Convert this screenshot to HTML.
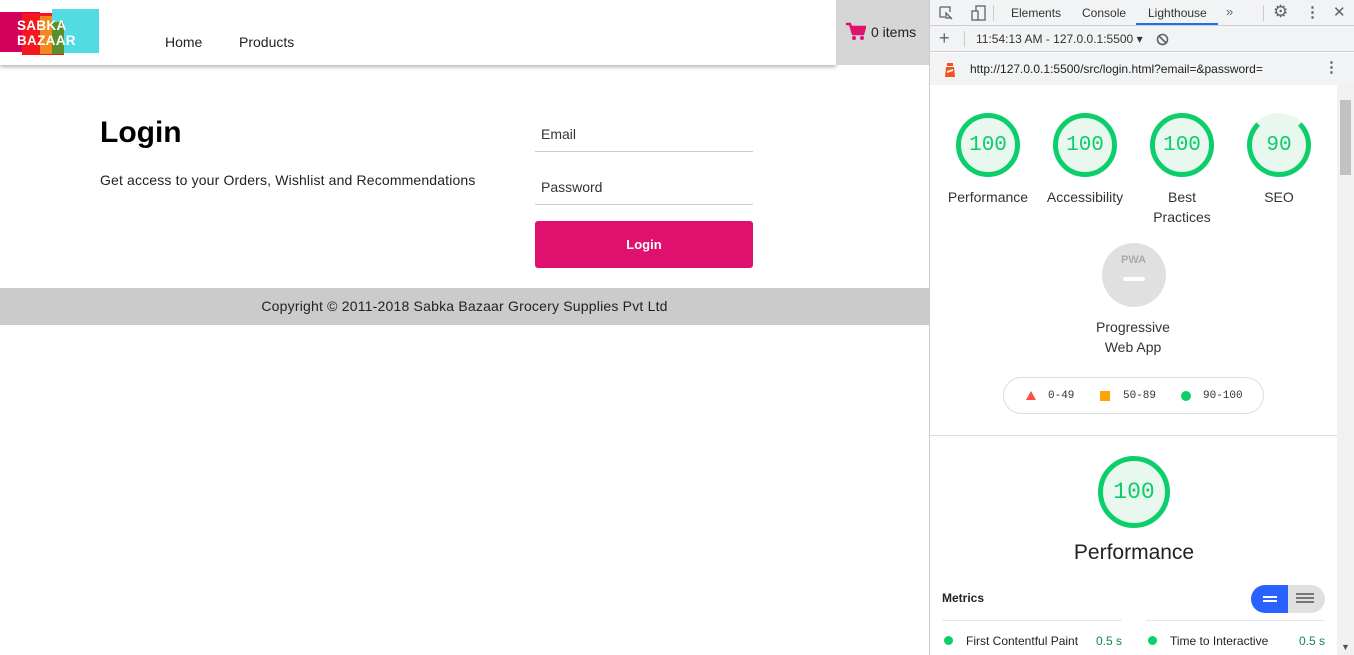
<!DOCTYPE html>
<html><head><style>
*{margin:0;padding:0;box-sizing:border-box}
body{width:1354px;height:655px;overflow:hidden;font-family:"Liberation Sans",sans-serif;background:#fff;position:relative}
.a{position:absolute}
.g{position:absolute;border-radius:50%;border:5px solid #0cce6b;background:#e8f8ef;color:#0cce6b;font-family:"Liberation Mono",monospace;display:flex;align-items:center;justify-content:center}
.lbl{position:absolute;font-size:14px;color:#333;text-align:center;width:100px;line-height:20px}
</style></head><body>
<div class="a" style="left:0;top:0;width:836px;height:65px;background:#fff;box-shadow:0 2px 4px rgba(0,0,0,.3);z-index:2"></div>
<div class="a" style="left:836px;top:0;width:93px;height:65px;background:#d6d6d6;z-index:2"></div>
<div class="a" style="left:0;top:12px;width:40px;height:40px;background:#d1005a;z-index:3"></div>
<div class="a" style="left:22px;top:13px;width:42px;height:42px;background:#f5161e;z-index:3"></div>
<div class="a" style="left:40px;top:16px;width:24px;height:38px;background:#f0891e;z-index:3"></div>
<div class="a" style="left:52px;top:9px;width:47px;height:44px;background:#53dbe4;z-index:3"></div>
<div class="a" style="left:52px;top:22px;width:12px;height:32px;background:#5d8e2c;z-index:3"></div>
<div class="a" style="left:17px;top:18px;color:#fff;font-weight:bold;font-size:13.5px;line-height:15px;z-index:4;letter-spacing:.3px">SABKA<br>BAZAAR</div>
<div class="a" style="left:165px;top:34px;font-size:14px;color:#222;z-index:3">Home</div>
<div class="a" style="left:239px;top:34px;font-size:14px;color:#222;z-index:3">Products</div>
<svg class="a" style="left:846px;top:22px;z-index:3" width="20" height="20" viewBox="0 0 20 20"><path d="M0 2h4l3 10h10l2-7H6" fill="none" stroke="#e0116f" stroke-width="2.5"/><rect x="6" y="5" width="12" height="6" fill="#e0116f"/><circle cx="8" cy="16" r="2" fill="#e0116f"/><circle cx="16" cy="16" r="2" fill="#e0116f"/></svg>
<div class="a" style="left:871px;top:24px;font-size:14px;color:#222;z-index:3">0 items</div>
<div class="a" style="left:100px;top:116px;font-size:30px;font-weight:bold;color:#000">Login</div>
<div class="a" style="left:100px;top:172px;font-size:14px;color:#222;letter-spacing:.15px">Get access to your Orders, Wishlist and Recommendations</div>
<div class="a" style="left:541px;top:126px;font-size:14px;color:#333">Email</div>
<div class="a" style="left:535px;top:151px;width:218px;height:1px;background:#ccc"></div>
<div class="a" style="left:541px;top:179px;font-size:14px;color:#333">Password</div>
<div class="a" style="left:535px;top:204px;width:218px;height:1px;background:#ccc"></div>
<div class="a" style="left:535px;top:221px;width:218px;height:47px;background:#e0106f;border-radius:3px;color:#fff;font-size:13px;font-weight:bold;display:flex;align-items:center;justify-content:center">Login</div>
<div class="a" style="left:0;top:288px;width:929px;height:37px;background:#cbcbcb;font-size:14px;color:#222;text-align:center;line-height:37px;letter-spacing:.2px">Copyright © 2011-2018 Sabka Bazaar Grocery Supplies Pvt Ltd</div>
<div class="a" style="left:929px;top:0;width:425px;height:655px;background:#fff;border-left:1px solid #ccc"></div>
<div class="a" style="left:930px;top:0;width:424px;height:26px;background:#f1f3f4;border-bottom:1px solid #cbcdd1"></div>
<svg class="a" style="left:938px;top:5px" width="50" height="16"><path d="M2 2h10v5M2 2v10h5M8 8l6 6M8 8v5h5z" fill="none" stroke="#5f6368" stroke-width="1.3"/><rect x="38" y="1" width="9" height="14" fill="none" stroke="#5f6368" stroke-width="1.3"/><rect x="34" y="6" width="6" height="9" fill="#f1f3f4" stroke="#5f6368" stroke-width="1.3"/></svg>
<div class="a" style="left:993px;top:5px;width:1px;height:16px;background:#ccc"></div>
<div class="a" style="left:1011px;top:6px;font-size:12px;color:#333">Elements</div>
<div class="a" style="left:1082px;top:6px;font-size:12px;color:#333">Console</div>
<div class="a" style="left:1148px;top:6px;font-size:12px;color:#333">Lighthouse</div>
<div class="a" style="left:1136px;top:23px;width:82px;height:2px;background:#1a73e8"></div>
<div class="a" style="left:1226px;top:4px;font-size:13px;color:#666">»</div>
<div class="a" style="left:1263px;top:5px;width:1px;height:16px;background:#ccc"></div>
<div class="a" style="left:1273px;top:2px;font-size:17px;color:#5f6368">⚙</div>
<div class="a" style="left:1305px;top:3px;font-size:15px;color:#5f6368;font-weight:bold">⋮</div>
<div class="a" style="left:1333px;top:3px;font-size:15px;color:#5f6368">✕</div>
<div class="a" style="left:930px;top:26px;width:424px;height:26px;background:#f1f3f4;border-bottom:1px solid #cbcdd1"></div>
<div class="a" style="left:939px;top:28px;font-size:18px;color:#5f6368">+</div>
<div class="a" style="left:964px;top:31px;width:1px;height:16px;background:#ccc"></div>
<div class="a" style="left:976px;top:32px;font-size:12px;color:#333">11:54:13 AM - 127.0.0.1:5500 ▾</div>
<svg class="a" style="left:1156px;top:33px" width="13" height="13"><circle cx="6.5" cy="6.5" r="5" fill="none" stroke="#5f6368" stroke-width="1.6"/><path d="M3 3l7 7" stroke="#5f6368" stroke-width="1.6"/></svg>
<div class="a" style="left:930px;top:53px;width:424px;height:32px;background:#f1f3f4"></div>
<svg class="a" style="left:943px;top:60px" width="14" height="18"><path d="M4 3h6v3H4z" fill="#f4511e"/><path d="M3 7h8l1 10H2z" fill="#f4511e"/><path d="M4 11l6-2v2l-6 2z" fill="#fff"/></svg>
<div class="a" style="left:970px;top:62px;font-size:12px;color:#222">http://127.0.0.1:5500/src/login.html?email=&amp;password=</div>
<div class="a" style="left:1324px;top:58px;font-size:15px;color:#5f6368;font-weight:bold">⋮</div>
<div class="a" style="left:1337px;top:85px;width:17px;height:570px;background:#f1f1f1"></div>
<div class="a" style="left:1340px;top:100px;width:11px;height:75px;background:#c1c1c1"></div>
<div class="a" style="left:1341px;top:642px;font-size:9px;color:#555">▼</div>
<div class="g" style="left:956px;top:113px;width:64px;height:64px;font-size:21px">100</div>
<div class="g" style="left:1053px;top:113px;width:64px;height:64px;font-size:21px">100</div>
<div class="g" style="left:1150px;top:113px;width:64px;height:64px;font-size:21px">100</div>
<div class="g" style="left:1247px;top:113px;width:64px;height:64px;font-size:21px;border-top-color:#e8f8ef">90</div>
<div class="lbl" style="left:938px;top:187px">Performance</div>
<div class="lbl" style="left:1035px;top:187px">Accessibility</div>
<div class="lbl" style="left:1132px;top:187px">Best<br>Practices</div>
<div class="lbl" style="left:1229px;top:187px">SEO</div>
<div class="a" style="left:1102px;top:243px;width:64px;height:64px;border-radius:50%;background:#e0e0e0"></div>
<div class="a" style="left:1121px;top:254px;font-size:11px;font-weight:bold;color:#aaa">PWA</div>
<div class="a" style="left:1123px;top:277px;width:22px;height:4px;background:#fff;border-radius:2px"></div>
<div class="lbl" style="left:1083px;top:317px">Progressive<br>Web App</div>
<div class="a" style="left:1003px;top:377px;width:261px;height:37px;border:1px solid #ddd;border-radius:19px"></div>
<div class="a" style="left:1026px;top:391px;width:0;height:0;border-left:5px solid transparent;border-right:5px solid transparent;border-bottom:9px solid #ff4e42"></div>
<div class="a" style="left:1048px;top:390px;font-size:11px;font-family:'Liberation Mono',monospace;color:#333">0-49</div>
<div class="a" style="left:1100px;top:391px;width:10px;height:10px;background:#ffa400"></div>
<div class="a" style="left:1123px;top:390px;font-size:11px;font-family:'Liberation Mono',monospace;color:#333">50-89</div>
<div class="a" style="left:1181px;top:391px;width:10px;height:10px;border-radius:50%;background:#0cce6b"></div>
<div class="a" style="left:1203px;top:390px;font-size:11px;font-family:'Liberation Mono',monospace;color:#333">90-100</div>
<div class="a" style="left:930px;top:435px;width:407px;height:1px;background:#ddd"></div>
<div class="g" style="left:1098px;top:456px;width:72px;height:72px;font-size:23px">100</div>
<div class="a" style="left:1034px;top:541px;width:200px;text-align:center;font-size:21px;color:#222">Performance</div>
<div class="a" style="left:942px;top:591px;font-size:12px;font-weight:bold;color:#222">Metrics</div>
<div class="a" style="left:1251px;top:585px;width:37px;height:28px;background:#2962ff;border-radius:14px 0 0 14px"></div>
<div class="a" style="left:1263px;top:596px;width:14px;height:2px;background:#fff;box-shadow:0 4px 0 #fff"></div>
<div class="a" style="left:1288px;top:585px;width:37px;height:28px;background:#e0e0e0;border-radius:0 14px 14px 0"></div>
<div class="a" style="left:1296px;top:593px;width:18px;height:2px;background:#777;box-shadow:0 4px 0 #777,0 8px 0 #777"></div>
<div class="a" style="left:942px;top:620px;width:180px;height:1px;background:#e6e6e6"></div>
<div class="a" style="left:1146px;top:620px;width:179px;height:1px;background:#e6e6e6"></div>
<div class="a" style="left:944px;top:636px;width:9px;height:9px;border-radius:50%;background:#0cce6b"></div>
<div class="a" style="left:966px;top:634px;font-size:12px;color:#222">First Contentful Paint</div>
<div class="a" style="left:1096px;top:634px;font-size:12px;color:#0a8a4a">0.5 s</div>
<div class="a" style="left:1148px;top:636px;width:9px;height:9px;border-radius:50%;background:#0cce6b"></div>
<div class="a" style="left:1170px;top:634px;font-size:12px;color:#222">Time to Interactive</div>
<div class="a" style="left:1299px;top:634px;font-size:12px;color:#0a8a4a">0.5 s</div>
</body></html>
